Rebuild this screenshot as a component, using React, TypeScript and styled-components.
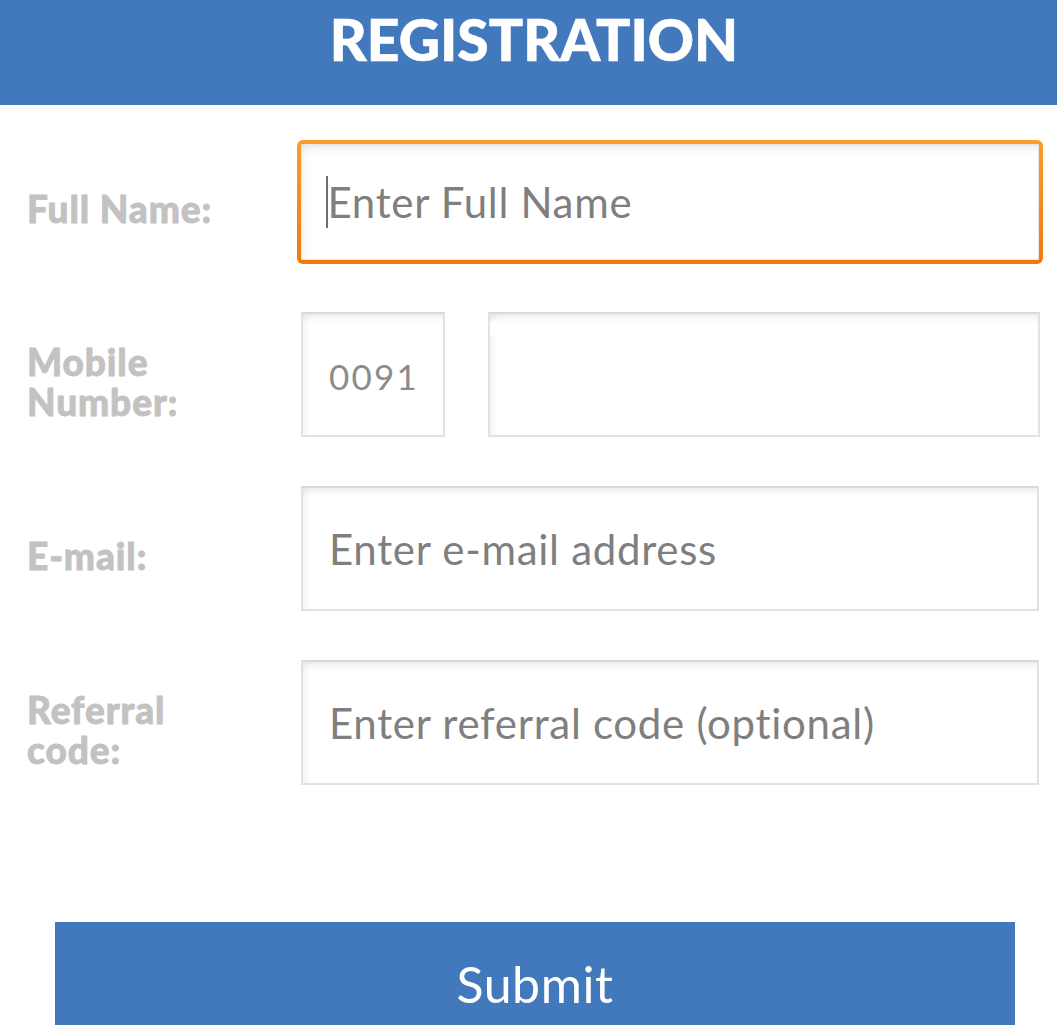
import React from "react";
import styled, { createGlobalStyle, css } from "styled-components";

const Global = createGlobalStyle`
  html, body {
    margin: 0;
    padding: 0;
    background: #ffffff;
    overflow: hidden;
    font-family: Lato, "Open Sans", sans-serif;
  }
  * { box-sizing: border-box; }
`;

const Page = styled.div`
  width: 1057px;
  height: 1025px;
  display: flex;
  flex-direction: column;
  background: #fff;
`;

const Header = styled.header`
  height: 105px;
  background: #4279bd;
  color: #fff;
  text-align: center;
  padding-top: 11px;
  padding-left: 11px;
  font-family: Lato, sans-serif;
  font-weight: 900;
  font-size: 57px;
  line-height: 57px;
  letter-spacing: 0px;
  -webkit-text-stroke: 0.6px #fff;
`;

const Form = styled.form`
  display: flex;
  flex-direction: column;
  padding: 35px 0 0 27px;
`;

const Row = styled.div<{ $gap: number }>`
  display: flex;
  align-items: center;
  margin-bottom: ${(p) => p.$gap}px;
`;

const Label = styled.label`
  width: 274px;
  flex: none;
  padding-top: 14px;
  color: #c2c2c2;
  font-weight: 900;
  font-size: 37px;
  line-height: 40px;
  letter-spacing: 0.9px;
  -webkit-text-stroke: 0.8px #c2c2c2;
`;

const boxBase = css`
  display: flex;
  align-items: center;
  background: #fff;
  color: #7f7f7f;
  font-size: 42px;
  line-height: 1;
  letter-spacing: 0.7px;
`;

const Field = styled.div<{ $width: number }>`
  ${boxBase};
  position: relative;
  width: ${(p) => p.$width}px;
  height: 125px;
  padding-left: 26px;
  border: 2px solid #e2e2e2;
  border-top-color: #d9d9d9;
  box-shadow: inset 0 7px 9px -5px rgba(0, 0, 0, 0.1),
    inset 7px 0 9px -5px rgba(0, 0, 0, 0.06);
`;

const FocusedField = styled.div`
  ${boxBase};
  width: 746px;
  height: 124px;
  margin-left: -4px;
  padding-left: 25px;
  border-radius: 6px;
  border: 4px solid transparent;
  background:
    linear-gradient(#fff, #fff) padding-box,
    linear-gradient(180deg, #fb9c2c 0%, #f07a08 100%) border-box;
  box-shadow: inset 0 0 0 1px #e8e8e8, inset 0 8px 10px -5px rgba(0, 0, 0, 0.1),
    inset 8px 0 10px -5px rgba(0, 0, 0, 0.06);
`;

const Caret = styled.span`
  display: inline-block;
  width: 1.5px;
  height: 52px;
  background: #707070;
`;

const Code = styled.span`
  color: #8c8c8c;
  font-size: 35px;
  letter-spacing: 2.2px;
  padding-top: 4px;
`;

const PhoneGroup = styled.div`
  display: flex;
  gap: 43px;
`;

const Gloss = styled.span`
  position: absolute;
  left: 0;
  top: 8px;
  width: 70px;
  height: 14px;
  background: linear-gradient(90deg, #fff 40%, rgba(255, 255, 255, 0));
  border-radius: 0 0 60px 0;
`;

const SubmitWrap = styled.div`
  margin-top: 137px;
  padding-left: 55px;
`;

const SubmitButton = styled.button`
  width: 960px;
  height: 103px;
  border: none;
  background: #4279bd;
  color: #fff;
  font-family: Lato, sans-serif;
  font-size: 50px;
  font-weight: 400;
  line-height: 50px;
  padding: 21px 0 0 0;
  display: block;
  text-align: center;
  letter-spacing: 0.6px;
`;

export default function App() {
  return (
    <Page>
      <Global />
      <Header>REGISTRATION</Header>
      <Form>
        <Row $gap={48}>
          <Label>Full Name:</Label>
          <FocusedField>
            <Caret />
            Enter Full Name
          </FocusedField>
        </Row>
        <Row $gap={49}>
          <Label>
            Mobile
            <br />
            Number:
          </Label>
          <PhoneGroup>
            <Field $width={144}>
              <Code>0091</Code>
            </Field>
            <Field $width={552}>
              <Gloss />
            </Field>
          </PhoneGroup>
        </Row>
        <Row $gap={49}>
          <Label>E-mail:</Label>
          <Field $width={738}>Enter e-mail address</Field>
        </Row>
        <Row $gap={0}>
          <Label>
            Referral
            <br />
            code:
          </Label>
          <Field $width={738}>Enter referral code (optional)</Field>
        </Row>
      </Form>
      <SubmitWrap>
        <SubmitButton type="button">Submit</SubmitButton>
      </SubmitWrap>
    </Page>
  );
}
